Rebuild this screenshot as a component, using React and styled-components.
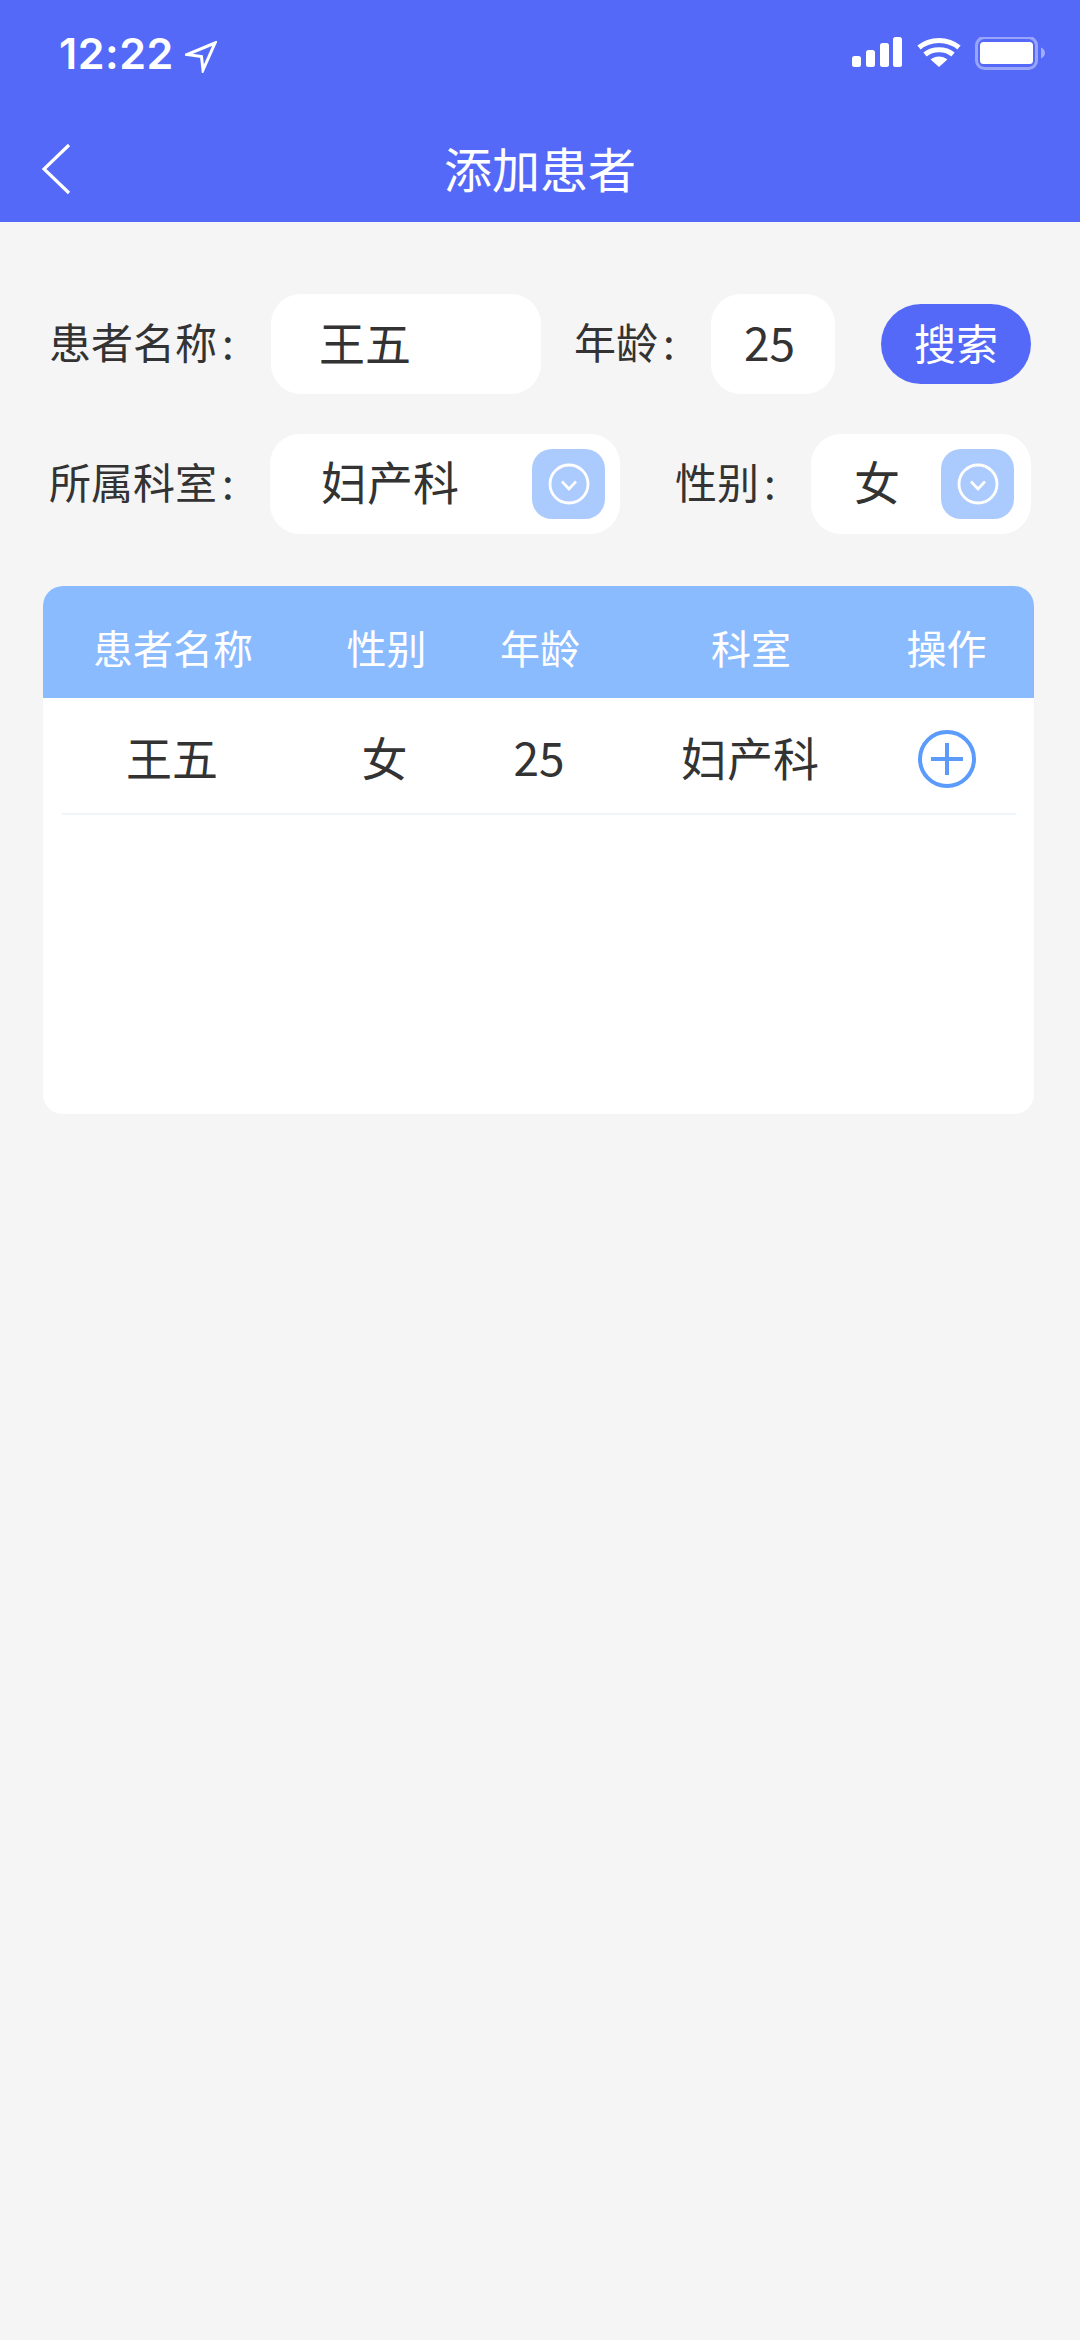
import React from "react";
import styled, { createGlobalStyle } from "styled-components";

const Global = createGlobalStyle`
  html, body { margin: 0; padding: 0; background: #f5f5f5; }
  body { font-family: "Noto Sans CJK SC", "Noto Sans", sans-serif; color: #333; }
  * { box-sizing: border-box; }
`;

const Page = styled.div`
  width: 1080px;
  height: 2340px;
  background: #f5f5f5;
  overflow: hidden;
`;
const Header = styled.header`
  height: 222px;
  background: #5469f8;
  color: #fff;
`;
const StatusBar = styled.div`
  height: 114px;
  padding: 30px 34px 0 59px;
  display: flex;
  justify-content: space-between;
  align-items: flex-start;
`;
const TimeGroup = styled.div`
  display: flex;
  align-items: flex-start;
  gap: 11px;
`;
const Time = styled.span`
  font-family: Inter, sans-serif;
  font-size: 43px;
  line-height: 46px;
  font-weight: 600;
  letter-spacing: 0.5px;
`;
const ArrowIcon = styled.svg`
  width: 32px;
  height: 32px;
  margin-top: 11px;
  flex: none;
`;
const StatusIcons = styled.svg`
  width: 194px;
  height: 36px;
  margin-top: 7px;
  flex: none;
`;
const NavBar = styled.div`
  height: 108px;
  display: grid;
  grid-template-columns: 1fr auto 1fr;
  align-items: center;
  padding: 0 42px;
`;
const BackIcon = styled.svg`
  width: 30px;
  height: 54px;
  margin-top: 2px;
`;
const Title = styled.h1`
  margin: 0 0 2px;
  font-size: 48px;
  line-height: 60px;
  font-weight: 400;
`;
const Content = styled.main`
  padding: 72px 46px 0 43px;
`;
const FormRow = styled.div`
  display: flex;
  align-items: center;
  height: 100px;
  padding-left: 6px;
  margin-bottom: 40px;
`;
const Label = styled.label`
  width: ${(p) => p.$w}px;
  margin-left: ${(p) => p.$ml || 0}px;
  margin-bottom: 6px;
  font-size: 42px;
  line-height: 60px;
  color: #333;
  flex: none;
  white-space: nowrap;
`;
const Colon = styled.span`
  margin-left: 5px;
`;
const Field = styled.div`
  width: ${(p) => p.$w}px;
  height: 100px;
  padding-left: ${(p) => p.$pl}px;
  padding-right: ${(p) => p.$pr || 15}px;
  background: #fff;
  border-radius: 30px;
  display: flex;
  align-items: center;
  justify-content: space-between;
  flex: none;
`;
const Value = styled.span`
  font-size: 46px;
  line-height: 60px;
  color: #333;
  margin-bottom: ${(p) => p.$mb || 6}px;
`;
const SearchButton = styled.button`
  width: 150px;
  height: 80px;
  margin-left: 46px;
  border: 0;
  border-radius: 40px;
  background: #5469f8;
  color: #fff;
  font-family: inherit;
  font-size: 42px;
  padding: 0 0 6px;
  flex: none;
`;
const DropBox = styled.span`
  width: 73px;
  height: 70px;
  border-radius: 20px;
  background: #abcbff;
  display: flex;
  align-items: center;
  justify-content: center;
  flex: none;
`;
const ChevronCircle = styled.svg`
  width: 42px;
  height: 42px;
`;
const Card = styled.section`
  margin-top: 52px;
  width: 991px;
  height: 528px;
  background: #fff;
  border-radius: 20px;
  overflow: hidden;
`;
const TableHead = styled.div`
  height: 112px;
  background: #8abbff;
  color: #fff;
  display: grid;
  grid-template-columns: 260px 167px 140px 282px 109px;
  align-items: center;
  font-size: 40px;
  padding-top: 9px;
`;
const HeadCell = styled.div`
  text-align: center;
`;
const TableRow = styled.div`
  height: 117px;
  margin: 0 18px 0 19px;
  border-bottom: 2px solid #f0f4fb;
  display: grid;
  grid-template-columns: 220px 205px 104px 318px 76px;
  align-items: center;
  font-size: 46px;
  color: #333;
`;
const RowCell = styled.div`
  text-align: center;
  display: flex;
  justify-content: center;
`;
const PlusIcon = styled.svg`
  width: 60px;
  height: 60px;
  margin-top: 6px;
`;

const Chevron = () => (
  <ChevronCircle viewBox="0 0 42 42" fill="none" stroke="#fff">
    <circle cx="21" cy="21" r="19" strokeWidth="2.800" />
    <path d="M14 18.500l7 7.500 7-7.500" strokeWidth="2.600" />
  </ChevronCircle>
);

export default function App() {
  return (
    <Page>
      <Global />
      <Header>
        <StatusBar>
          <TimeGroup>
            <Time>12:22</Time>
            <ArrowIcon viewBox="0 0 32 32" fill="none" stroke="#fff" strokeWidth="3" strokeLinejoin="miter">
              <path d="M30 2 2 13.500l14.500 2L18 29z" />
            </ArrowIcon>
          </TimeGroup>
          <StatusIcons viewBox="0 0 194 36">
            <g fill="#fff">
              <rect x="0" y="19" width="9" height="11" rx="2.500" />
              <rect x="14" y="13" width="9" height="17" rx="2.500" />
              <rect x="28" y="6" width="9" height="24" rx="2.500" />
              <rect x="41" y="0" width="9" height="30" rx="2.500" />
              <path d="M87 30l-8.400-7.600c4.600-4 12.200-4 16.800 0z" />
            </g>
            <g fill="none" stroke="#fff" strokeWidth="5">
              <path d="M67 10.500c11-9.500 29-9.500 40 0" />
              <path d="M73 17.500c7.500-6.500 20.500-6.500 28 0" />
            </g>
            <rect x="124.500" y="0.500" width="60" height="31" rx="8" fill="none" stroke="#fff" strokeOpacity="0.4" strokeWidth="3" />
            <rect x="128" y="5" width="53" height="22" rx="3.500" fill="#fff" />
            <path d="M189 10.500c2.500 1 4 3 4 5.500s-1.500 4.500-4 5.500z" fill="#fff" fillOpacity="0.45" />
          </StatusIcons>
        </StatusBar>
        <NavBar>
          <BackIcon viewBox="0 0 30 54" fill="none" stroke="#fff" strokeWidth="3.200">
            <path d="M27 3 2 27l25 24" />
          </BackIcon>
          <Title>添加患者</Title>
          <span />
        </NavBar>
      </Header>
      <Content>
        <FormRow>
          <Label $w={222}>患者名称<Colon>:</Colon></Label>
          <Field $w={270} $pl={48}><Value>王五</Value></Field>
          <Label $w={137} $ml={33}>年龄<Colon>:</Colon></Label>
          <Field $w={124} $pl={33}><Value>25</Value></Field>
          <SearchButton>搜索</SearchButton>
        </FormRow>
        <FormRow>
          <Label $w={221}>所属科室<Colon>:</Colon></Label>
          <Field $w={350} $pl={51}>
            <Value $mb={8}>妇产科</Value>
            <DropBox><Chevron /></DropBox>
          </Field>
          <Label $w={136} $ml={55}>性别<Colon>:</Colon></Label>
          <Field $w={220} $pl={43} $pr={17}>
            <Value $mb={9}>女</Value>
            <DropBox><Chevron /></DropBox>
          </Field>
        </FormRow>
        <Card>
          <TableHead>
            <HeadCell>患者名称</HeadCell>
            <HeadCell>性别</HeadCell>
            <HeadCell>年龄</HeadCell>
            <HeadCell>科室</HeadCell>
            <HeadCell>操作</HeadCell>
          </TableHead>
          <TableRow>
            <RowCell>王五</RowCell>
            <RowCell>女</RowCell>
            <RowCell>25</RowCell>
            <RowCell>妇产科</RowCell>
            <RowCell>
              <PlusIcon viewBox="0 0 60 60" fill="none" stroke="#5a9bfb" strokeWidth="4">
                <circle cx="30" cy="30" r="27" />
                <path d="M14 30h32M30 14v32" />
              </PlusIcon>
            </RowCell>
          </TableRow>
        </Card>
      </Content>
    </Page>
  );
}
